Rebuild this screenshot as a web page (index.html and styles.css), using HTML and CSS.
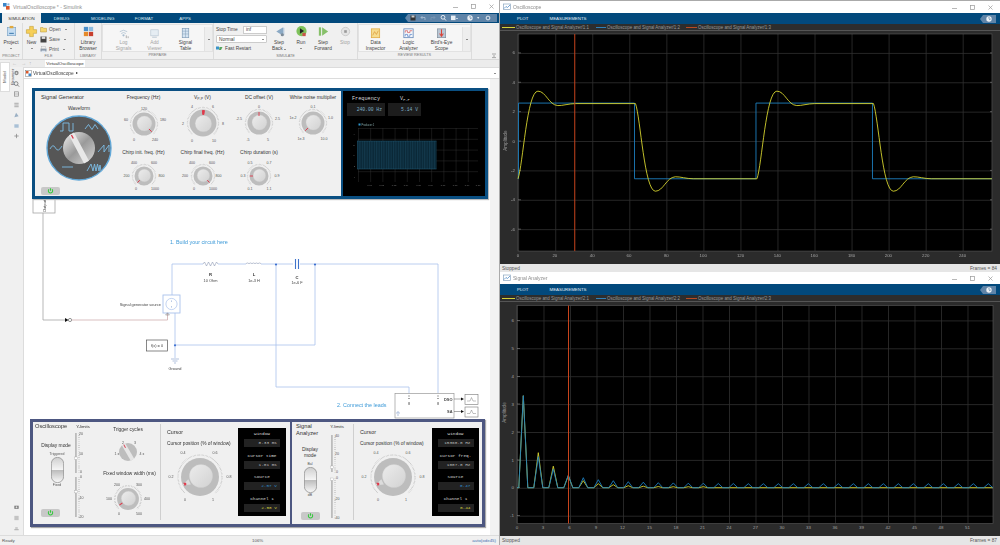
FILE: index.html
```html
<!DOCTYPE html>
<html lang="en">
<head>
<meta charset="utf-8">
<title>VirtualOscilloscope - Simulink</title>
<link rel="stylesheet" href="styles.css">
</head>
<body>
<svg class="defs" aria-hidden="true">
  <defs>
    <linearGradient id="capg" x1="0" y1="0" x2="1" y2="1"><stop offset="0" stop-color="#ececec"/><stop offset="1" stop-color="#d2d2d2"/></linearGradient>
    <linearGradient id="bigcap" x1="0" y1="0" x2="1" y2="1"><stop offset="0" stop-color="#f2f2f2"/><stop offset=".5" stop-color="#9a9a9a"/><stop offset="1" stop-color="#d8d8d8"/></linearGradient>
    <linearGradient id="tog" x1="0" y1="0" x2="0" y2="1"><stop offset="0" stop-color="#cfcfcf"/><stop offset=".48" stop-color="#f4f4f4"/><stop offset=".52" stop-color="#bdbdbd"/><stop offset="1" stop-color="#fafafa"/></linearGradient>
    <g id="k10"><circle class="tk" r="11.5"/><polygon class="gp" points="0,0 -14,15 14,15"/><circle class="rg" r="9.5"/><circle class="cp" r="6.2" cx=".4" cy="-.5"/></g>
    <g id="k12"><circle class="tk" r="13.5"/><polygon class="gp" points="0,0 -16,17 16,17"/><circle class="rg" r="11.5"/><circle class="cp" r="7.4" cx=".4" cy="-.5"/></g>
    <g id="k14"><circle class="tk" r="15.5"/><polygon class="gp" points="0,0 -18,19 18,19"/><circle class="rg" r="13.5"/><circle class="cp" r="8.2" cx=".4" cy=".6"/></g>
    <g id="k20"><circle class="tk" r="22"/><polygon class="gp" points="0,0 -24,25 24,25"/><circle class="rg" r="19"/><circle class="cp" r="11.6" cx="1" cy="-1"/></g>
    <path id="p10" class="pt" d="M0-9.2V-6"/>
    <path id="p12" class="pt" d="M0-11V-7"/>
    <path id="p14" class="pt" d="M-1-12.5H1L.6-8.5H-.6Z"/>
    <g id="p20"><path d="M-3-11.5L3-11.5 0-19.4Z" fill="#dcdcdc"/><path class="ptb" d="M-1.8-17.6H1.8L.8-15.2H-.8Z"/></g>
    <g id="pw"><path d="M4.2 1.200A1.150 1.150 0 1 0 5.800 1.200M5 .6V2" fill="none" stroke="#32c93a" stroke-width=".55"/></g>
    <path id="wmin" d="M0 4.5H5" stroke="#999" stroke-width=".7" fill="none"/>
    <rect id="wmax" x=".5" y="1.5" width="4" height="4" stroke="#999" stroke-width=".7" fill="none"/>
    <path id="wx" d="M.5 1.5L4.5 5.5M4.5 1.5L.5 5.5" stroke="#999" stroke-width=".7" fill="none"/>
    <g id="plotic"><rect x=".5" y=".5" width="7" height="5.5" fill="#fff" stroke="#8aa6c0" stroke-width=".7"/><path d="M1 5L3 3 4.5 4 7 1.5" stroke="#3d7fc0" stroke-width=".7" fill="none"/></g>
    <pattern id="sc1-grid" x="517.2" y="23.5" width="37.2" height="29.5" patternUnits="userSpaceOnUse"><path d="M.5 0V29.5M0 .5H37.2" stroke="#2f2f2f" stroke-width=".8" fill="none"/></pattern>
    <pattern id="sc2-grid" x="517" y="293" width="26.5" height="27.9" patternUnits="userSpaceOnUse"><path d="M.5 0V27.9M0 .5H26.5" stroke="#2f2f2f" stroke-width=".8" fill="none"/></pattern>
    <pattern id="mini-grid" x="358" y="128" width="12.2" height="10.8" patternUnits="userSpaceOnUse"><path d="M.3 0V10.8M0 .3H12.2" stroke="#363636" stroke-width=".5" fill="none"/></pattern>
    <pattern id="stripes" x="357" y="141" width="2.4" height="28" patternUnits="userSpaceOnUse"><rect width="2.4" height="28" fill="#0a2736"/><path d="M.6 0V28" stroke="#235c78" stroke-width=".4"/></pattern>
  </defs>
</svg>

<div class="desktop">
  <section class="model-win">
    <header class="titlebar">
      <svg class="title-ic" viewBox="0 0 8 8"><rect x="0" y="0" width="3.6" height="3.6" fill="#3c86c8"/><rect x="3" y="3" width="3.6" height="3.6" fill="#d9572a"/><rect x="4.4" y=".4" width="2" height="2" fill="#8db7dd"/></svg>
      <span class="title-tx">VirtualOscilloscope * - Simulink</span>
      <span class="win-ctl">
        <svg viewBox="0 0 5 7"><use href="#wmin"/></svg><svg viewBox="0 0 5 7"><use href="#wmax"/></svg><svg viewBox="0 0 5 7"><use href="#wx"/></svg>
      </span>
    </header>
    <nav class="tabs">
      <span class="tab on">SIMULATION</span><span class="tab">DEBUG</span><span class="tab">MODELING</span><span class="tab">FORMAT</span><span class="tab">APPS</span>
      <svg class="qa" viewBox="405 14 92 8">
        <path d="M405 18L408 14H497V22H408Z" fill="#5f84a8"/>
        <rect x="410.5" y="15.5" width="5" height="5" fill="#333"/><rect x="411.5" y="15.5" width="3" height="2" fill="#ccc"/>
        <path d="M421 17.5H425V20M421 17.5L422.5 16M421 17.5L422.5 19" stroke="#b7c9da" stroke-width=".7" fill="none"/>
        <path d="M435 17.5H431V20M435 17.5L433.5 16M435 17.5L433.5 19" stroke="#7f9bb6" stroke-width=".7" fill="none"/>
        <circle cx="443" cy="17.3" r="1.9" fill="none" stroke="#fff" stroke-width=".8"/><path d="M444.4 18.8L446 20.5" stroke="#fff" stroke-width=".9"/>
        <rect x="451" y="15.6" width="4.5" height="4.5" fill="#e6eef5"/><path d="M456 18H458L457 19.2Z" fill="#fff"/>
        <circle cx="470" cy="18" r="2.7" fill="#e9eef3"/><path d="M469 17.3Q470 15.7 471 17.3T470 18.7" stroke="#2a5c88" stroke-width=".5" fill="none"/>
        <path d="M477 17.2H479.4L478.2 18.7Z" fill="#fff"/>
        <circle cx="488" cy="18" r="1.9" fill="none" stroke="#fff" stroke-width=".8"/>
      </svg>
    </nav>

    <div class="ribbon">
      <div class="rgroup g-project">
        <div class="rbody">
          <div class="tool"><svg class="ti" viewBox="0 0 14 14"><rect x="2.5" y="2.5" width="9" height="9" fill="#c4dcf2" stroke="#7da4c6" stroke-width=".7"/><rect x="5" y="1" width="4" height="2.5" fill="#e0a83c"/><path d="M4.5 9H9.5" stroke="#2f6fa8"/></svg><span>Project</span><i class="drop"></i></div>
        </div>
        <div class="rlabel">PROJECT</div>
      </div>
      <div class="rgroup g-file">
        <div class="rbody">
          <div class="tool narrow"><svg class="ti" viewBox="0 0 14 14"><path d="M5 1.5H9V5H12.5V9H9V12.5H5V9H1.5V5H5Z" fill="#f6cf58" stroke="#c39a2a" stroke-width=".6"/></svg><span>New</span><i class="drop"></i></div>
          <div class="mini-col">
            <div class="mini"><svg viewBox="0 0 7 7"><path d="M.5 1.5H3L3.6 2.3H6.5V6H.5Z" fill="#f5d76e" stroke="#b7933a" stroke-width=".5"/></svg><span>Open</span><i class="drop"></i></div>
            <div class="mini"><svg viewBox="0 0 7 7"><rect x=".5" y=".5" width="6" height="6" fill="#444"/><rect x="1.7" y=".5" width="3.6" height="2.4" fill="#ddd"/></svg><span>Save</span><i class="drop"></i></div>
            <div class="mini"><svg viewBox="0 0 7 7"><rect x=".5" y="2.5" width="6" height="3" fill="#8c9aaa"/><rect x="1.7" y=".7" width="3.6" height="2" fill="#eee" stroke="#999" stroke-width=".3"/><rect x="1.7" y="4.6" width="3.6" height="1.9" fill="#dfe8f2"/></svg><span>Print</span><i class="drop"></i></div>
          </div>
        </div>
        <div class="rlabel">FILE</div>
      </div>
      <div class="rgroup g-lib">
        <div class="rbody">
          <div class="tool two"><svg class="ti" viewBox="0 0 14 14"><rect x="2" y="2" width="4.6" height="4.6" fill="#4a8fca"/><rect x="7.4" y="2" width="4.6" height="4.6" fill="#8dbce0"/><rect x="2" y="7.4" width="4.6" height="4.6" fill="#e58a2b"/><rect x="7.4" y="7.4" width="4.6" height="4.6" fill="#c73f2e"/></svg><span>Library</span><span>Browser</span></div>
        </div>
        <div class="rlabel">LIBRARY</div>
      </div>
      <div class="rgroup g-prep">
        <div class="rbody gallery">
          <div class="tool gt off"><svg class="ti" viewBox="0 0 14 14"><path d="M3 5Q7 2 11 5M4.5 7Q7 5 9.5 7" stroke="#a9bdcf" stroke-width=".8" fill="none"/><circle cx="7" cy="9" r="1.2" fill="#a9bdcf"/><path d="M10 12V9M12 12V10" stroke="#999" stroke-width=".8"/></svg><span>Log</span><span>Signals</span></div>
          <div class="tool gt off"><svg class="ti" viewBox="0 0 14 14"><rect x="3" y="3" width="8" height="6.5" fill="#e6edf3" stroke="#b8c6d2" stroke-width=".7"/><path d="M4.5 11H9.5" stroke="#b8c6d2"/></svg><span>Add</span><span>Viewer</span></div>
          <div class="tool gt"><svg class="ti" viewBox="0 0 14 14"><rect x="3.5" y="1.5" width="7" height="10" fill="#d5e4f2" stroke="#7e9ab5" stroke-width=".7"/><path d="M3.5 4.5H10.5M3.5 7.5H10.5M7 1.5V11.5" stroke="#7e9ab5" stroke-width=".5"/></svg><span>Signal</span><span>Table</span></div>
          <div class="more"><i class="drop dark"></i></div>
        </div>
        <div class="rlabel">PREPARE</div>
      </div>
      <div class="rgroup g-sim">
        <div class="rbody">
          <div class="stop-col">
            <div class="st-row"><span>Stop Time</span><span class="input">inf</span></div>
            <div class="select"><span>Normal</span><i class="drop dark"></i></div>
            <div class="fast"><svg viewBox="0 0 7 5"><rect x="0" y=".5" width="3" height="3" fill="#3b93c9"/><path d="M3.5 1H6.5L5 4H3Z" fill="#55a35c"/></svg><span>Fast Restart</span></div>
          </div>
          <div class="tool sim"><svg class="ti" viewBox="0 0 14 14"><path d="M11 2.5V11.5L3.5 7Z" fill="#8ba9c4"/><path d="M11.5 3V11" stroke="#bcd" stroke-width="1.5"/><circle cx="10" cy="10.5" r="1.7" fill="#7d8b98"/></svg><span>Step</span><span>Back <i class="drop in"></i></span></div>
          <div class="tool sim"><svg class="ti" viewBox="0 0 14 14"><circle cx="7" cy="6.5" r="5.5" fill="#7fc25b"/><path d="M5.3 3.5L9.8 6.5 5.3 9.5Z" fill="#222"/><rect x="8" y="8.5" width="3.5" height="3.5" fill="#c9524a"/></svg><span>Run</span><i class="drop"></i></div>
          <div class="tool sim"><svg class="ti" viewBox="0 0 14 14"><path d="M5.5 2.5L12 7 5.5 11.5Z" fill="#87c06a"/><rect x="2" y="2.5" width="2.4" height="9" fill="#87c06a"/></svg><span>Step</span><span>Forward</span></div>
          <div class="tool sim off"><svg class="ti" viewBox="0 0 14 14"><circle cx="7" cy="7" r="4.5" fill="#e4e4e4" stroke="#c4c4c4" stroke-width=".8"/><rect x="5.6" y="5.6" width="2.8" height="2.8" fill="#999"/></svg><span>Stop</span></div>
        </div>
        <div class="rlabel">SIMULATE</div>
      </div>
      <div class="rgroup g-rev">
        <div class="rbody gallery">
          <div class="tool gt rv"><svg class="ti" viewBox="0 0 14 14"><rect x="2.5" y="2" width="9" height="9.5" fill="#f6dc8e" stroke="#e0a83c" stroke-width=".8"/><path d="M4 9L6 5 8 8 10 4" stroke="#d89332" stroke-width=".7" fill="none"/></svg><span>Data</span><span>Inspector</span></div>
          <div class="tool gt rv"><svg class="ti" viewBox="0 0 14 14"><rect x="2" y="2" width="10" height="9.5" fill="#f4f7fb" stroke="#5a80b5" stroke-width=".8"/><path d="M3.5 6V4H6V6H8.5V4H11" stroke="#d14a4a" stroke-width=".7" fill="none"/><path d="M3.5 10V8H6V10H8.5V8H11" stroke="#4a79c4" stroke-width=".7" fill="none"/></svg><span>Logic</span><span>Analyzer</span></div>
          <div class="tool gt rv"><svg class="ti" viewBox="0 0 14 14"><rect x="2.5" y="2" width="9" height="9.5" fill="#b9c6d4" stroke="#7c8b9a" stroke-width=".7"/><path d="M7 2.5V9M5 7L7 10 9 7" stroke="#d8453a" stroke-width="1.1" fill="none"/></svg><span>Bird's-Eye</span><span>Scope</span></div>
          <div class="more"><i class="drop dark"></i></div>
        </div>
        <div class="rlabel">REVIEW RESULTS</div>
      </div>
      <svg class="collapse" viewBox="0 0 6 6"><path d="M1 1H5M1 4.6H5M3 2V4" stroke="#777" stroke-width=".6" fill="none"/></svg>
    </div>

    <div class="work">
      <div class="mb"><span>Model Browser</span></div>
      <div class="work-main">
        <div class="crumbs">
          <span class="cr-arrows">&#8592;&nbsp;&nbsp;&nbsp;&#8594;&nbsp;&nbsp;&#8593;</span>
          <span class="cr-tab">VirtualOscilloscope</span>
          <span class="cr-end"></span>
        </div>
        <div class="work-row">
          <div class="side">
            <svg viewBox="0 0 7 7"><circle cx="3.5" cy="3.5" r="2.5" fill="#888"/><circle cx="3.5" cy="3.5" r="1" fill="#eee"/></svg>
            <svg viewBox="0 0 7 7"><circle cx="3" cy="3" r="2.2" fill="none" stroke="#777"/><path d="M4.6 4.6L6.6 6.6" stroke="#777"/></svg>
            <svg viewBox="0 0 7 7"><rect x="1" y="1" width="5" height="5" fill="none" stroke="#888" stroke-width=".8"/><path d="M1 3.5H6" stroke="#888" stroke-width=".6"/></svg>
            <svg viewBox="0 0 7 7"><path d="M1 1.5H6M1 3.5H6M1 5.5H6" stroke="#888" stroke-width=".8"/></svg>
            <svg viewBox="0 0 7 7"><path d="M1 6L3 1 6 5Z" fill="#9bb0c4"/></svg>
            <svg viewBox="0 0 7 7"><rect x="1" y="1.5" width="5" height="4" fill="#a9c0d6"/></svg>
            <svg viewBox="0 0 7 7"><path d="M3.5 1V6M1 3.5H6" stroke="#888" stroke-width=".9"/></svg>
            <span class="side-gap"></span>
            <svg viewBox="0 0 7 7"><rect x="1" y="2" width="5" height="3.6" fill="#777"/><circle cx="3.5" cy="3.8" r="1.1" fill="#ddd"/></svg>
            <svg viewBox="0 0 7 7"><rect x="1" y="1" width="5" height="5" fill="#c3c3c3"/></svg>
            <svg viewBox="0 0 7 7"><path d="M1 5.5H6M2 3.5H5" stroke="#888" stroke-width=".8"/></svg>
          </div>
          <div class="work-col">
            <div class="address">
              <svg viewBox="0 0 7 7"><rect x=".5" y=".5" width="6" height="6" fill="#fff" stroke="#777" stroke-width=".5"/><rect x="1" y="1" width="2.5" height="2.5" fill="#d9572a"/><rect x="3.5" y="3.5" width="2.5" height="2.5" fill="#3c86c8"/></svg>
              <span>VirtualOscilloscope</span><b class="caret"></b>
              <i class="drop dark end"></i>
            </div>
            <div class="canvas-row">
              <main class="canvas">
                <svg class="wires" viewBox="24 79 466 456">
                  <g class="w-gray"><path d="M43 213V320H66"/><rect x="33" y="199" width="22" height="14" fill="#fff"/></g>
                  <text class="rot" transform="rotate(-90 44 206)" x="44" y="207.5">Output</text>
                  <path class="w-pink" d="M72 320H167.5V313"/>
                  <path d="M65 318V322L68.5 320Z" fill="#111"/><circle cx="70" cy="320" r="1.6" fill="none" stroke="#333" stroke-width=".5"/>
                  <g class="w-blue">
                    <path d="M172 295V264H203M218 264H246M261 264H293M300 264H438V393"/>
                    <path d="M276 264V387H409V394"/>
                    <path d="M315 264V345H175"/>
                    <path d="M175 313V358"/>
                  </g>
                  <g fill="#3b6fd0"><circle cx="276" cy="264.5" r="1.1"/><circle cx="315" cy="264.5" r="1.1"/><circle cx="175" cy="345.3" r="1.1"/></g>
                  <path class="w-part" d="M203 264l1.5-2 2 4 2-4 2 4 2-4 2 4 2-4 1.5 2"/>
                  <path class="w-part" d="M246 264a1.6 1.6 0 0 1 3 0a1.6 1.6 0 0 1 3 0a1.6 1.6 0 0 1 3 0a1.6 1.6 0 0 1 3 0a1.6 1.6 0 0 1 3 0"/>
                  <path d="M295.5 259V269M298.5 259V269" stroke="#3f74cc" stroke-width="1.1"/>
                  <text class="t5 b mid" x="210.5" y="276">R</text><text class="t4 mid" x="210.5" y="281.5">10 Ohm</text>
                  <text class="t5 b mid" x="254" y="276">L</text><text class="t4 mid" x="254" y="281.5">1e-3 H</text>
                  <text class="t5 b mid" x="297" y="278.5">C</text><text class="t4 mid" x="297" y="284">1e-6 F</text>
                  <text class="note" x="170" y="244">1. Build your circuit here</text>
                  <text class="t4 end" x="161" y="305.5">Signal generator source</text>
                  <rect x="163" y="295" width="17" height="18" fill="#fff" stroke="#a9c2ec" stroke-width=".9"/>
                  <circle cx="171.5" cy="304" r="5.6" fill="none" stroke="#a9c2ec" stroke-width=".7"/>
                  <path d="M171.5 300.5V301.8M171.5 306.2V307.5" stroke="#6b8fc9" stroke-width=".6"/>
                  <path d="M165.6 315L167.5 312.8 169.4 315Z" fill="none" stroke="#555" stroke-width=".4"/>
                  <rect x="146.5" y="340" width="21" height="11" fill="#fff" stroke="#555" stroke-width=".7"/>
                  <text class="t4 mid" x="157" y="347">f(x) = 0</text>
                  <path d="M171 359H179M172.5 361H177.5M174 363H176" stroke="#8fa6cf" stroke-width=".7"/>
                  <text class="t4 mid" x="175" y="369.5">Ground</text>
                  <text class="note" x="337" y="407">2. Connect the leads</text>
                  <rect x="395" y="393.5" width="59" height="24.5" fill="#fff" stroke="#999" stroke-width=".7"/>
                  <path d="M408 396H410M408 398.5H410M437 396H439M437 398.5H439" stroke="#444" stroke-width=".5"/>
                  <text class="t4 mid" x="409" y="405">8</text><text class="t4 mid" x="438" y="405">8</text>
                  <text class="t4 b end" x="452.5" y="400.5">DSO</text><text class="t4 b end" x="452.5" y="413">SA</text>
                  <path d="M396 413H400M397 415H399M398 411V413" stroke="#8fa6cf" stroke-width=".7"/>
                  <path d="M454 399H462M454 411.5H462" stroke="#555" stroke-width=".5"/>
                  <path d="M461 397.5V400.5L464 399ZM461 410V413L464 411.5Z" fill="#111"/>
                  <g fill="#fff" stroke="#777" stroke-width=".6"><rect x="465" y="394.5" width="13" height="10"/><rect x="465" y="407" width="13" height="10"/></g>
                  <path d="M467 401H470L471.5 397.5 473 401H476M467 413.5H470L471.5 410 473 413.5H476" fill="none" stroke="#666" stroke-width=".4"/>
                </svg>

                <div class="sg">
                  <div class="sg-light">
                    <div class="sg-wave">
                      <h2 class="sg-title">Signal Generator</h2>
                      <p class="wave-lbl">Waveform</p>
                      <svg class="wave-knob" viewBox="-34 -34 68 68">
                        <circle r="32" fill="#565656" stroke="#62a8d8" stroke-width="1.4"/>
                        <g fill="none" stroke="#7dbde6" stroke-width=".9">
                          <path d="M-19-17H-16V-25H-10V-17H-6V-25"/>
                          <path d="M6-19L9.5-23.500 13-18.500 16-23.500 19-19"/>
                          <path d="M-29 1Q-26-5-23.500 0T-17-2"/>
                          <path d="M19 4L25-3V4L30-3V4"/>
                          <path d="M-17 19H-6"/>
                          <path d="M8 23L12 16 14 23 15.500 16 17 23 18.500 16 20 23 21 17 22 23"/>
                        </g>
                        <circle r="16" fill="url(#bigcap)"/>
                        <rect x="-2.8" y="-16" width="5.6" height="32" fill="#e8e8e8" transform="rotate(-28)"/>
                        <path d="M-.6-15V-11" stroke="#d8364a" stroke-width="1.3" transform="rotate(-28)"/>
                      </svg>
                      <span class="power"><svg viewBox="0 0 10 4"><use href="#pw"/></svg></span>
                    </div>
                    <div class="sg-grid">
                      <figure class="kn r1"><figcaption>Frequency (Hz)</figcaption>
                        <svg viewBox="-30 -21 60 42"><g transform="translate(0 1)"><use href="#k12"/><use href="#p12" transform="rotate(135)"/></g><text x="0" y="-13.500">120</text><text x="-18" y="-1.700">60</text><text x="19" y="-1.700">180</text><text x="-10" y="18.300">0</text><text x="11" y="18.300">240</text></svg></figure>
                      <figure class="kn r1"><figcaption>V<sub>P-P</sub> (V)</figcaption>
                        <svg viewBox="-30 -21 60 42"><use href="#k14"/><use href="#p14" transform="rotate(2)"/><text x="-11" y="-14.700">4</text><text x="10" y="-14.700">6</text><text x="-20" y="2.300">2</text><text x="20" y="2.300">8</text><text x="-11" y="19.300">0</text><text x="11" y="19.300">10</text></svg></figure>
                      <figure class="kn r1"><figcaption>DC offset (V)</figcaption>
                        <svg viewBox="-30 -21 60 42"><use href="#k12"/><use href="#p12"/><text x="0" y="-15.500">0</text><text x="-20" y="-2.700">-2.5</text><text x="18.500" y="-2.700">2.5</text><text x="-11" y="18.300">-5</text><text x="9" y="18.300">5</text></svg></figure>
                      <figure class="kn r1"><figcaption>White noise multiplier</figcaption>
                        <svg viewBox="-30 -21 60 42"><use href="#k12"/><use href="#p12" transform="rotate(-135)"/><text x="0" y="-15.500">0.1</text><text x="-20" y="-3.700">1e-2</text><text x="17.500" y="-3.700">1.0</text><text x="-12" y="17.300">1e-3</text><text x="11" y="17.300">10.0</text></svg></figure>
                      <figure class="kn r2"><figcaption>Chirp init. freq. (Hz)</figcaption>
                        <svg viewBox="-30 -19 60 38"><use href="#k10"/><use href="#p10" transform="rotate(-135)"/><text x="-10" y="-11.700">400</text><text x="10" y="-11.700">600</text><text x="-17.500" y="1.300">200</text><text x="17.500" y="1.300">800</text><text x="-8" y="14.300">0</text><text x="11" y="14.300">1000</text></svg></figure>
                      <figure class="kn r2"><figcaption>Chirp final freq. (Hz)</figcaption>
                        <svg viewBox="-30 -19 60 38"><use href="#k10"/><use href="#p10" transform="rotate(135)"/><text x="-11" y="-11.700">400</text><text x="9" y="-11.700">600</text><text x="-18" y="1.300">200</text><text x="15.500" y="1.300">800</text><text x="-9" y="14.300">0</text><text x="10" y="14.300">1000</text></svg></figure>
                      <figure class="kn r2"><figcaption>Chirp duration (s)</figcaption>
                        <svg viewBox="-30 -19 60 38"><use href="#k10"/><use href="#p10" transform="rotate(-90)"/><text x="-9" y="-11.700">0.5</text><text x="10" y="-11.700">0.7</text><text x="-16" y="1.300">0.3</text><text x="18" y="1.300">0.9</text><text x="-9" y="14.300">0.1</text><text x="10" y="14.300">1.1</text></svg></figure>
                    </div>
                  </div>
                  <div class="sg-black">
                    <div class="sg-heads"><span class="h-f">Frequency</span><span class="h-v">V<sub>P-P</sub></span></div>
                    <div class="sg-vals"><span class="val-f">240.00 Hz</span><span class="val-v">5.14 V</span></div>
                    <svg class="mini-plot" viewBox="343 118 141 72">
                      <rect x="358" y="128" width="120" height="54" fill="url(#mini-grid)"/>
                      <rect x="358.500" y="123.500" width="2" height="2" fill="#2f95cc"/>
                      <text class="mp-leg" x="361.500" y="125.500">Producer:1</text>
                      <rect x="357" y="141" width="79.500" height="28" fill="url(#stripes)"/>
                      <path d="M357 141H436.500M357 169H436.500" stroke="#235c78" stroke-width=".5"/>
                      <g class="mp-t">
                        <text x="354" y="134.500">4</text><text x="354" y="145.500">2</text><text x="354" y="156">0</text><text x="354" y="166.500">-2</text><text x="354" y="177.500">-4</text>
                        <text x="369.500" y="186">0.01</text><text x="381.500" y="186">0.02</text><text x="394" y="186">0.03</text><text x="406" y="186">0.04</text><text x="418.500" y="186">0.05</text><text x="430.500" y="186">0.06</text><text x="443" y="186">0.07</text><text x="455" y="186">0.08</text><text x="467" y="186">0.09</text><text x="478" y="186">0.10</text>
                      </g>
                    </svg>
                  </div>
                </div>

                <div class="dash">
                  <section class="dsec osc">
                    <div class="c1">
                      <h3>Oscilloscope</h3>
                      <p class="dm">Display mode</p>
                      <p class="tiny top">Triggered</p>
                      <svg class="toggle" viewBox="0 0 13 26"><rect x=".4" y=".4" width="12.200" height="25.200" rx="6" fill="url(#tog)" stroke="#777" stroke-width=".6"/></svg>
                      <p class="tiny bot">Fixed</p>
                      <span class="power p1"><svg viewBox="0 0 10 4"><use href="#pw"/></svg></span>
                    </div>
                    <svg class="yl y1" viewBox="72 422 26 102">
                      <text class="yt" x="83" y="428">Y-limits</text>
                      <rect class="trk" x="75" y="433" width="1.800" height="40"/><rect class="trk" x="75" y="477" width="1.800" height="40"/>
                      <rect class="thm" x="74.500" y="457" width="2.800" height="2.400"/><rect class="thm" x="74.500" y="490.500" width="2.800" height="2.400"/>
                      <path class="tks" d="M79 433V472.500M79 477V517"/>
                      <text x="81" y="434.500">20</text><text x="81" y="454.500">10</text><text x="81" y="473">0</text><text x="81" y="478">0</text><text x="81" y="498.500">-10</text><text x="81" y="517.500">-20</text>
                    </svg>
                    <div class="c3">
                      <p class="lb trig">Trigger cycles</p>
                      <svg class="trigk" viewBox="-30 -16 60 32">
                        <circle class="rg" r="9"/>
                        <rect x="-2" y="-9" width="4" height="18" fill="#e6e6e6" transform="rotate(-30)"/>
                        <path d="M0-8.500V-5" stroke="#d8364a" stroke-width=".9" transform="rotate(-30)"/>
                        <text x="-11" y="3.300">1 x</text><text x="-5" y="-7.700">2</text><text x="7" y="-7.700">3</text><text x="14" y="3.300">4 x</text>
                      </svg>
                      <p class="lb fix">Fixed window width (ms)</p>
                      <svg class="fixk" viewBox="-30 -22 60 44">
                        <use href="#k10" transform="scale(1.150)"/><use href="#p10" transform="rotate(-125) scale(1.150)"/>
                        <text x="-11" y="-12.700">200</text><text x="11" y="-12.700">300</text><text x="-19" y="1.300">100</text><text x="19" y="1.300">400</text><text x="-9" y="16.300">0</text><text x="11" y="16.300">500</text>
                      </svg>
                    </div>
                    <div class="c4">
                      <h4>Cursor</h4>
                      <p class="lb cp-l">Cursor position (% of window)</p>
                      <svg class="bigk" viewBox="-38 -29 76 58">
                        <use href="#k20"/><use href="#p20" transform="rotate(-115)"/>
                        <text x="-17" y="-22.700">0.4</text><text x="15" y="-22.700">0.6</text><text x="-29" y="1">0.2</text><text x="29" y="1">0.8</text><text x="-15" y="24.300">0</text><text x="13" y="24.300">1</text>
                      </svg>
                    </div>
                    <div class="readout">
                      <div class="ro"><span>Window</span><b>8.33 ms</b></div>
                      <div class="ro"><span>Cursor time</span><b>1.01 ms</b></div>
                      <div class="ro"><span>Source</span><b class="s">2.57 V</b></div>
                      <div class="ro"><span>Channel 1</span><b class="c">2.58 V</b></div>
                    </div>
                  </section>
                  <section class="dsec sa">
                    <div class="c1">
                      <h3>Signal<br>Analyzer</h3>
                      <p class="dm two-l">Display<br>mode</p>
                      <p class="tiny top">Bal</p>
                      <svg class="toggle" viewBox="0 0 13 26"><rect x=".4" y=".4" width="12.200" height="25.200" rx="6" fill="url(#tog)" stroke="#777" stroke-width=".6"/></svg>
                      <p class="tiny bot">dB</p>
                      <span class="power p2"><svg viewBox="0 0 10 4"><use href="#pw"/></svg></span>
                    </div>
                    <svg class="yl y2" viewBox="328 422 24 102">
                      <text class="yt" x="336.500" y="428">Y-limits</text>
                      <rect class="trk" x="330.500" y="435" width="1.800" height="37"/><rect class="trk" x="330.500" y="478" width="1.800" height="40"/>
                      <rect class="thm" x="329.800" y="466" width="3" height="2.400"/><rect class="thm" x="329.800" y="478" width="3" height="2.400"/>
                      <path class="tks" d="M334.500 435V472.500M334.500 478V518"/>
                      <text x="336.500" y="436.500">40</text><text x="336.500" y="455">20</text><text x="336.500" y="473">0</text><text x="336.500" y="479">0</text><text x="336.500" y="500">-20</text><text x="336.500" y="519">-40</text>
                    </svg>
                    <div class="c4">
                      <h4>Cursor</h4>
                      <p class="lb cp-l">Cursor position (% of window)</p>
                      <svg class="bigk" viewBox="-38 -29 76 58">
                        <use href="#k20"/><use href="#p20" transform="rotate(-115)"/>
                        <text x="-17" y="-22.700">0.4</text><text x="15" y="-22.700">0.6</text><text x="-29" y="1">0.2</text><text x="29" y="1">0.8</text><text x="-15" y="24.300">0</text><text x="13" y="24.300">1</text>
                      </svg>
                    </div>
                    <div class="readout">
                      <div class="ro"><span>Window</span><b>15360.0 Hz</b></div>
                      <div class="ro"><span>Cursor freq.</span><b>1007.0 Hz</b></div>
                      <div class="ro"><span>Source</span><b class="s">0.47</b></div>
                      <div class="ro"><span>Channel 1</span><b class="c">0.44</b></div>
                    </div>
                  </section>
                </div>
              </main>
              <div class="vscroll"></div>
            </div>
          </div>
        </div>
      </div>
    </div>
    <footer class="status"><span>Ready</span><span class="st-z">106%</span><span class="st-s">auto(ode45)</span></footer>
  </section>

  <div class="scopes">
    <section class="scope s1">
      <header class="titlebar sc-t">
        <svg class="title-ic" viewBox="0 0 8 7"><use href="#plotic"/></svg>
        <span class="title-tx">Oscilloscope</span>
        <span class="win-ctl"><svg viewBox="0 0 5 7"><use href="#wmin"/></svg><svg viewBox="0 0 5 7"><use href="#wmax"/></svg><svg viewBox="0 0 5 7"><use href="#wx"/></svg></span>
      </header>
      <nav class="sc-tabs"><span>PLOT</span><span>MEASUREMENTS</span>
        <svg class="help" viewBox="0 0 16 8"><path d="M0 4L3 0H16V8H3Z" fill="#5f84a8"/><circle cx="9" cy="4" r="2.700" fill="#eef2f6"/><path d="M8 3.300Q9 1.700 10 3.300T9 4.700" stroke="#2a5c88" stroke-width=".5" fill="none"/></svg>
      </nav>
      <div class="legend">
        <i class="lg y"></i><span>Oscilloscope and Signal Analyzer/1:1</span><i class="lg b"></i><span>Oscilloscope and Signal Analyzer/1:2</span><i class="lg r"></i><span>Oscilloscope and Signal Analyzer/1:3</span>
      </div>
      <svg class="plot" viewBox="500 31 500 234">
        <rect x="517" y="34" width="476" height="218" fill="#000"/>
        <rect x="517" y="34" width="476" height="218" fill="url(#sc1-grid)"/>
        <rect class="frame" x="517" y="34" width="476" height="218"/>
        <path class="tick" d="M517 53h3M517 82.500h3M517 112h3M517 141.500h3M517 171h3M517 200.500h3M517 230h3M993 53h-2M993 82.500h-2M993 112h-2M993 141.500h-2M993 171h-2M993 200.500h-2M993 230h-2"/>
        <g class="ax ym"><text x="514" y="54.500">6</text><text x="514" y="84">4</text><text x="514" y="113.500">2</text><text x="514" y="143">0</text><text x="514" y="172.500">-2</text><text x="514" y="202">-4</text><text x="514" y="231.500">-6</text></g>
        <g class="ax xm"><text x="517" y="258">0</text><text x="554" y="258">20</text><text x="591.500" y="258">40</text><text x="628.500" y="258">60</text><text x="666" y="258">80</text><text x="703" y="258">100</text><text x="740.500" y="258">120</text><text x="777.500" y="258">140</text><text x="814.500" y="258">160</text><text x="852" y="258">180</text><text x="889" y="258">200</text><text x="926.500" y="258">220</text><text x="963.500" y="258">240</text></g>
        <text class="amp" transform="rotate(-90 506 141)" x="506" y="141">Amplitude</text>
        <path class="sq" d="M517 179.400H517.500V103.400H634V179.400H756V103.400H873V179.400H993"/>
        <path class="yw" d="M517 179.400c5-14 9-88 20-88c8 0 11 14 20 14.500c5 .2 11-2 18-2H635c5 14 9 88 20 88c8 0 11-14 20-14.500c5-.2 11 2 18 2H757c5-14 9-88 20-88c8 0 11 14 20 14.500c5 .2 11-2 18-2H874c5 14 9 88 20 88c8 0 11-14 20-14.500c5-.2 11 2 18 2H993"/>
        <path class="cur" d="M574 34V252"/>
      </svg>
      <footer class="sc-st"><span>Stopped</span><span>Frames = 84</span></footer>
    </section>
    <section class="scope s2">
      <header class="titlebar sc-t">
        <svg class="title-ic" viewBox="0 0 8 7"><use href="#plotic"/></svg>
        <span class="title-tx">Signal Analyzer</span>
        <span class="win-ctl"><svg viewBox="0 0 5 7"><use href="#wmin"/></svg><svg viewBox="0 0 5 7"><use href="#wmax"/></svg><svg viewBox="0 0 5 7"><use href="#wx"/></svg></span>
      </header>
      <nav class="sc-tabs"><span>PLOT</span><span>MEASUREMENTS</span>
        <svg class="help" viewBox="0 0 16 8"><path d="M0 4L3 0H16V8H3Z" fill="#5f84a8"/><circle cx="9" cy="4" r="2.700" fill="#eef2f6"/><path d="M8 3.300Q9 1.700 10 3.300T9 4.700" stroke="#2a5c88" stroke-width=".5" fill="none"/></svg>
      </nav>
      <div class="legend">
        <i class="lg y"></i><span>Oscilloscope and Signal Analyzer/2:1</span><i class="lg b"></i><span>Oscilloscope and Signal Analyzer/2:2</span><i class="lg r"></i><span>Oscilloscope and Signal Analyzer/2:3</span>
      </div>
      <svg class="plot" viewBox="500 303 500 233">
        <rect x="517" y="306" width="476" height="218" fill="#000"/>
        <rect x="517" y="306" width="476" height="218" fill="url(#sc2-grid)"/>
        <rect class="frame" x="517" y="306" width="476" height="218"/>
        <path class="tick" d="M517 321h3M517 349h3M517 377h3M517 404.500h3M517 432.500h3M517 460.500h3M517 488h3M517 516h3"/>
        <g class="ax ym"><text x="514" y="322.500">6</text><text x="514" y="350">5</text><text x="514" y="378.200">4</text><text x="514" y="406">3</text><text x="514" y="434">2</text><text x="514" y="462">1</text><text x="514" y="489.500">0</text><text x="514" y="517.500">-1</text></g>
        <g class="ax xm"><text x="517" y="529.500">0</text><text x="543" y="529.500">3</text><text x="569.500" y="529.500">6</text><text x="596" y="529.500">9</text><text x="622.500" y="529.500">12</text><text x="649.500" y="529.500">15</text><text x="676" y="529.500">18</text><text x="702.500" y="529.500">21</text><text x="729" y="529.500">24</text><text x="755.500" y="529.500">27</text><text x="782" y="529.500">30</text><text x="808.500" y="529.500">33</text><text x="835" y="529.500">36</text><text x="861.500" y="529.500">39</text><text x="888" y="529.500">42</text><text x="914.500" y="529.500">45</text><text x="941" y="529.500">48</text><text x="967.500" y="529.500">51</text></g>
        <text class="amp" transform="rotate(-90 506 413)" x="506" y="413">Amplitude</text>
        <path class="yw" d="M517 488.200h1.800l4.500-92l4.500 92h6l4.500-35l4.500 35h6l4.500-21.500l4.500 21.500h6l4.500-12l4.500 12h6l4.500-7l4.500 7h6l4.500-4l4.500 4h6l4.500-3l4.500 3h6l4.500-2l4.500 2h6l4.500-1.500l4.500 1.500h6l4.500-1.200l4.500 1.200h6l4.500-1l4.500 1h6l4.500-1l4.500 1h6l4.500-1l4.500 1H993"/>
        <path class="sq" d="M517 488.200h1.800l4.500-92l4.500 92h6l4.500-31l4.500 31h6l4.500-18.500l4.500 18.500h6l4.500-12.500l4.500 12.500h6l4.500-10l4.500 10h6l4.500-8l4.500 8h6l4.500-7l4.500 7h6l4.500-6l4.500 6h6l4.500-5.500l4.500 5.500h6l4.500-5l4.500 5h6l4.500-4.800l4.500 4.800h6l4.500-4.500l4.500 4.500h6l4.500-4.500l4.500 4.500h6l4.500-4.200l4.500 4.200h6l4.500-4.200l4.500 4.200h6l4.500-4l4.500 4h6l4.500-4l4.500 4h6l4.500-4l4.500 4h6l4.500-4l4.500 4h6l4.500-4l4.500 4h6l4.500-4l4.500 4h6l4.500-4l4.500 4h6l4.500-4l4.500 4h6l4.500-4l4.500 4h6l4.500-4l4.500 4h6l4.500-4l4.500 4h6l4.500-4l4.500 4h6l4.500-4l4.500 4h6l4.500-4l4.500 4h6l4.500-4l4.500 4h6l4.500-4l4.500 4h6l4.500-4l4.500 4H993"/>
        <path class="cur" d="M568.500 306V524"/>
      </svg>
      <footer class="sc-st"><span>Stopped</span><span>Frames = 87</span></footer>
    </section>
  </div>
</div>
</body>
</html>
```
FILE: styles.css
```css
*{box-sizing:border-box}
html,body{margin:0;padding:0;background:#fff}
body{width:1000px;height:545px;overflow:hidden;font-family:"Liberation Sans",Arial,sans-serif;color:#333}
p,h2,h3,h4,figure{margin:0;font-weight:normal}
i{font-style:normal}
sub{font-size:.7em;vertical-align:-.15em;line-height:0}
.defs{display:block;width:0;height:0}
.desktop{display:flex;width:1000px;height:545px;filter:blur(.36px)}

.model-win{width:500px;height:545px;display:flex;flex-direction:column;background:#f0f0f0;border-right:1px solid #aaa}
.titlebar{height:13px;flex:none;display:flex;align-items:center;background:#fff;padding:0 0 0 3px}
.title-ic{width:8px;height:8px;margin-right:2px}
.title-tx{font-size:5px;color:#8d8d8d}
.win-ctl{margin-left:auto;display:flex;gap:13px;padding-right:5px}
.win-ctl svg{width:5px;height:7px}

.tabs{height:10px;flex:none;display:flex;background:#02497c;align-items:stretch;position:relative}
.tab{font-size:4.4px;color:#dfe9f1;display:flex;align-items:center;justify-content:center;width:41.200px}
.tab.on{background:#f0f0f0;color:#333;margin-left:2px;width:39px}
.qa{position:absolute;left:405px;top:1px;width:92px;height:8px}

.ribbon{height:37px;flex:none;display:flex;position:relative;background:#f0f0f0;border-bottom:1px solid #d8d8d8}
.rgroup{display:flex;flex-direction:column;border-right:1px solid #dcdcdc}
.rbody{height:30px;display:flex;align-items:flex-start;padding-top:2px}
.rlabel{font-size:3.8px;text-align:center;color:#777;height:6px;line-height:6px}
.g-project{width:23px}
.g-file{width:52px}
.g-lib{width:27px}
.g-prep{width:112px}
.g-sim{width:144px}
.g-rev{width:114px}
.tool{display:flex;flex-direction:column;align-items:center;width:100%;font-size:4.8px;color:#444;line-height:6px}
.tool .ti{width:13px;height:13px;margin-bottom:2px}
.tool.narrow{width:17px;flex:none}
.tool.off span{color:#a4a4a4}
.drop{display:inline-block;width:0;height:0;border-left:1.400px solid transparent;border-right:1.400px solid transparent;border-top:1.800px solid #333}
.tool>.drop{margin-top:2px}
.drop.in{vertical-align:.5px}
.mini-col{display:flex;flex-direction:column;gap:3px;margin-top:1px}
.mini{display:flex;align-items:center;font-size:4.8px;height:7px;color:#555}
.mini svg{width:7px;height:7px;margin-right:2px}
.mini .drop{margin-left:4px}
.gallery{background:#f6f6f6;border:1px solid #e2e2e2;height:28px;padding:2px 0 0;margin-top:1px}
.g-prep .gallery{margin-right:0}
.gt{width:31px;flex:none}
.gt .ti{margin-bottom:0}
.rv{width:33px}
.g-prep .gt:first-child{margin-left:5px}
.more{margin-left:auto;width:8px;height:100%;display:flex;align-items:center;justify-content:center;border-left:1px solid #e2e2e2;background:#eee}
.drop.dark{border-top-color:#222}
.stop-col{width:53px;flex:none;padding-left:2px;display:flex;flex-direction:column;font-size:4.8px;color:#444}
.st-row{display:flex;align-items:center;justify-content:space-between;height:9px}
.input{width:24px;height:8px;background:#fff;border:1px solid #ccc;padding-left:2px;line-height:6px}
.select{height:8px;margin-top:1px;border:1px solid #ccc;background:#fff;display:flex;align-items:center;justify-content:space-between;padding:0 2px;border-radius:1px}
.fast{display:flex;align-items:center;height:9px;margin-top:1px}
.fast svg{width:7px;height:5px;margin-right:2px}
.sim{width:22px;flex:none}
.sim:nth-child(2){margin-left:1px}
.collapse{position:absolute;right:2px;top:30px;width:6px;height:6px}

.work{flex:1;display:flex;min-height:0}
.mb{width:10px;flex:none;background:#f0f0f0;padding-top:2px}
.mb span{display:block;writing-mode:vertical-rl;transform:rotate(180deg);font-size:4.4px;background:#fff;border:1px solid #ddd;height:30px;width:10px;text-align:center;line-height:8px;color:#555}
.work-main{flex:1;display:flex;flex-direction:column;min-width:0}
.crumbs{height:7px;flex:none;display:flex;align-items:stretch;font-size:4.4px;background:#ececec}
.cr-arrows{width:35px;padding-left:2px;color:#bbb;line-height:7px;font-size:5px}
.cr-tab{background:#fff;width:40px;text-align:center;line-height:7px;color:#333}
.work-row{flex:1;display:flex;min-height:0}
.side{width:14px;flex:none;background:#f0f0f0;display:flex;flex-direction:column;align-items:center;gap:4.500px;padding:3px 0 4px;border-right:1px solid #dcdcdc}
.side svg{width:7px;height:6px;flex:none}
.side-gap{flex:1}
.work-col{flex:1;min-width:0;display:flex;flex-direction:column}
.address{height:12px;flex:none;background:#fff;border:1px solid #dcdcdc;border-width:1px 0;display:flex;align-items:center;font-size:4.800px;padding:0 2px 0 1px;color:#444}
.address svg{width:7px;height:7px;margin-right:1px}
.caret{width:0;height:0;border-left:2px solid #222;border-top:1.500px solid transparent;border-bottom:1.500px solid transparent;margin-left:2.500px}
.end{margin-left:auto;margin-right:1px}
.canvas-row{flex:1;display:flex;min-height:0}
.canvas{width:466px;height:456px;background:#fff;position:relative;overflow:hidden;flex:none}
.vscroll{flex:1;background:#f2f2f2}
.wires{position:absolute;left:0;top:0;width:466px;height:456px}
.w-gray path,.w-gray rect{stroke:#a5a5a5;stroke-width:.8;fill:none}
.w-gray rect{fill:#fff}
.w-pink{fill:none;stroke:#cfaeb0;stroke-width:.8}
.w-blue path{fill:none;stroke:#a9c2ec;stroke-width:.8}
.w-part{fill:none;stroke:#8e9bb5;stroke-width:.6}
.t4{font-size:3.9px;fill:#444}
.t5{font-size:4.2px;fill:#333}
.b{font-weight:bold}
.mid{text-anchor:middle}
.wires .end{text-anchor:end;margin:0}
.note{font-size:5.400px;fill:#3d9ad8}
.rot{font-size:4px;text-anchor:middle;fill:#333}

.sg{position:absolute;left:8px;top:9px;width:456px;height:111px;display:flex;gap:2px;background:#0a4f82;border:3px solid #0a4f82;box-shadow:1px 1px 1px #bbb}
.sg-light{width:306px;background:#f0f0f0;display:flex}
.sg-wave{width:80px;flex:none;display:flex;flex-direction:column}
.sg-title{font-size:5.700px;height:8px;line-height:8px;margin:2px 0 0 6px;color:#333;white-space:nowrap}
.wave-lbl{font-size:4.900px;height:8px;line-height:8px;margin:4px 0 1px 10px;width:68px;text-align:center}
.wave-knob{width:68px;height:68px;margin-left:10px;flex:none}
.power{display:block;width:19px;height:7.500px;background:#c8c8c8;border-radius:2px;margin:5px 0 0 6px}
.power svg{display:block;width:19px;height:7.500px}
.sg-grid{flex:1;display:grid;grid-template-columns:57px 61px 52px 56px;grid-template-rows:55px 50px}
.kn{display:flex;flex-direction:column;align-items:center;padding-top:3px}
.kn figcaption{font-size:4.900px;height:8px;line-height:8px;white-space:nowrap;color:#333}
.kn svg{width:60px;flex:none;overflow:visible}
.r1 svg{height:42px}
.r2 svg{height:38px}
.kn text,.bigk text,.fixk text,.trigk text,.yl text{font-size:3.600px;fill:#555;text-anchor:middle}
.tk{fill:none;stroke:#aaa;stroke-width:1.300;stroke-dasharray:.35 1}
.gp{fill:#f0f0f0}
.rg{fill:#bdbdbd}
.cp{fill:url(#capg);stroke:#cfcfcf;stroke-width:.3}
.pt{stroke:#e0394a;stroke-width:.9;fill:#e0394a}
.ptb{fill:#e0394a}

.sg-black{flex:1;background:#000;display:flex;flex-direction:column;font-family:"Liberation Mono",monospace;padding-top:5px}
.sg-heads{display:flex;font-size:5.200px;color:#ddd;height:7px;line-height:7px}
.h-f{margin-left:9px}
.h-v{margin-left:20px}
.sg-vals{display:flex;gap:3px;margin:0 0 0 4px;font-size:4.700px;height:13px}
.sg-vals span{background:#1d1d1d;display:flex;align-items:center;justify-content:flex-end;padding-right:3px;color:#7fb0cc}
.val-f{width:38px}
.val-v{width:33px}
.mini-plot{width:141px;height:72px;margin-top:2px;flex:none}
.mp-leg{font-size:2.600px;fill:#8aa;font-family:"Liberation Sans",sans-serif}
.mp-t text{font-size:2.400px;fill:#777;text-anchor:middle;font-family:"Liberation Sans",sans-serif}

.dash{position:absolute;left:6px;top:340px;width:455px;height:108px;display:flex;gap:2px;background:#4d5781;border:3px solid #4d5781;box-shadow:1px 1px 1px #aaa}
.dsec{background:#f0f0f0;display:flex;height:102px}
.osc{width:257px}
.sa{width:190px}
.c1{flex:none;display:flex;flex-direction:column;align-items:center;position:relative}
.osc .c1{width:39px}
.sa .c1{width:36px}
.c1 h3{font-size:5.700px;line-height:7px;align-self:flex-start;margin:1px 0 0 2px;color:#333}
.sa .c1 h3{margin-left:4px}
.dm{font-size:4.900px;line-height:6px;margin-top:13px;text-align:center}
.osc .dm{margin-left:7px;white-space:nowrap}
.sa .dm{margin-top:10px;margin-left:0}
.tiny{font-size:3.500px;line-height:5px;color:#555}
.osc .tiny{margin-left:9px}
.sa .tiny{margin-left:0}
.tiny.top{margin-top:3px}
.toggle{width:13px;height:26px;flex:none}
.osc .toggle{margin-left:9px}
.p1{margin:21px 0 0 -4px}
.p2{margin:14px 0 0 0}
.c1 .power{flex:none}
.yl{flex:none;height:102px}
.y1{width:26px}
.y2{width:25px}
.yl .yt{font-size:4.300px;fill:#333}
.trk{fill:#bcbcbc}
.thm{fill:#fff;stroke:#999;stroke-width:.3}
.tks{stroke:#aaa;stroke-width:1.800;stroke-dasharray:.35 1.700;fill:none}
.c3{width:60px;flex:none;display:flex;flex-direction:column;align-items:center}
.lb{font-size:4.800px;line-height:6px;color:#333;white-space:nowrap}
.trig{margin-top:5px}
.trigk{width:60px;height:32px;flex:none;margin-top:3px}
.fix{margin:3px 0 0 3px}
.fixk{width:60px;height:44px;flex:none}
.c4{width:78px;flex:none;border-left:1px solid #cfcfcf;margin-left:2px;margin-top:2px;padding-left:1px;display:flex;flex-direction:column;height:96px}
.osc .c4{width:76px}
.sa .c4{width:79px;margin-left:0}
.c4 h4{font-size:5.300px;line-height:8px;margin:4px 0 0 5px;color:#333}
.cp-l{margin:5px 0 1px 5px}
.bigk{width:76px;height:58px;flex:none}
.readout{flex:none;width:48px;height:88px;margin-top:6px;background:#000;padding-top:2px;display:flex;flex-direction:column;font-family:"Liberation Mono",monospace;align-items:center}
.osc .readout{margin-left:2px}
.sa .readout{width:47px}
.ro{height:22px;width:36px;display:flex;flex-direction:column;align-items:stretch}
.ro span{font-size:4.400px;color:#ddd;text-align:center;line-height:8px;white-space:nowrap}
.ro b{font-weight:normal;font-size:4.400px;height:8px;line-height:8px;margin-top:1px;background:#222;color:#bcbcbc;text-align:right;padding-right:3px;white-space:nowrap}
.ro .s{color:#2f8fd0}
.ro .c{color:#d6cf3a}

.status{height:10px;flex:none;font-size:4.400px;display:flex;align-items:center;position:relative;background:#f0f0f0;border-top:1px solid #dcdcdc;padding-left:2px;color:#555}
.st-z{position:absolute;left:252px}
.st-s{position:absolute;right:3px;color:#3f6fb0}

.scopes{flex:1;display:flex;flex-direction:column}
.scope{display:flex;flex-direction:column;background:#2b2b2b;flex:none;width:500px}
.s1{height:272px;border-top:1px solid #aaa}
.s2{height:273px}
.sc-t{height:12px;padding-left:3px}
.scope .win-ctl{gap:13px;padding-right:7px}
.sc-tabs{height:11px;flex:none;background:#02497c;display:flex;align-items:center;font-size:4.400px;color:#e4edf4;padding-left:17px;gap:21px;position:relative}
.help{position:absolute;right:4px;top:1.500px;width:16px;height:8px}
.legend{height:7px;flex:none;background:#2d2d2d;border-bottom:1px solid #555;display:flex;align-items:center;font-size:4.450px;color:#9a9a9a;white-space:nowrap}
.legend span{width:74px;flex:none}
.lg{height:.8px;flex:none;margin-right:1px}
.lg.y{width:13px;background:#d4d23a;margin-left:2px}
.lg.b{width:10px;background:#2f80b8;margin-left:6px}
.lg.r{width:11px;background:#b84a22;margin-left:5px}
.plot{flex:1;display:block;width:500px;min-height:0}
.frame{fill:none;stroke:#5a5a5a;stroke-width:.6}
.tick{stroke:#9a9a9a;stroke-width:.5;fill:none}
.ax text{font-size:4.400px;fill:#a5a5a5}
.ym text{text-anchor:end}
.xm text{text-anchor:middle}
.amp{font-size:4.600px;fill:#9a9a9a;text-anchor:middle}
.sq{fill:none;stroke:#1d7fbf;stroke-width:.9}
.yw{fill:none;stroke:#d6d32f;stroke-width:.9}
.cur{stroke:#c8441c;stroke-width:1}
.sc-st{height:8px;flex:none;background:#e6e6e6;display:flex;align-items:center;justify-content:space-between;font-size:4.800px;padding:0 3px 0 2px;color:#555}
.s2 .sc-st{height:9px}
```
